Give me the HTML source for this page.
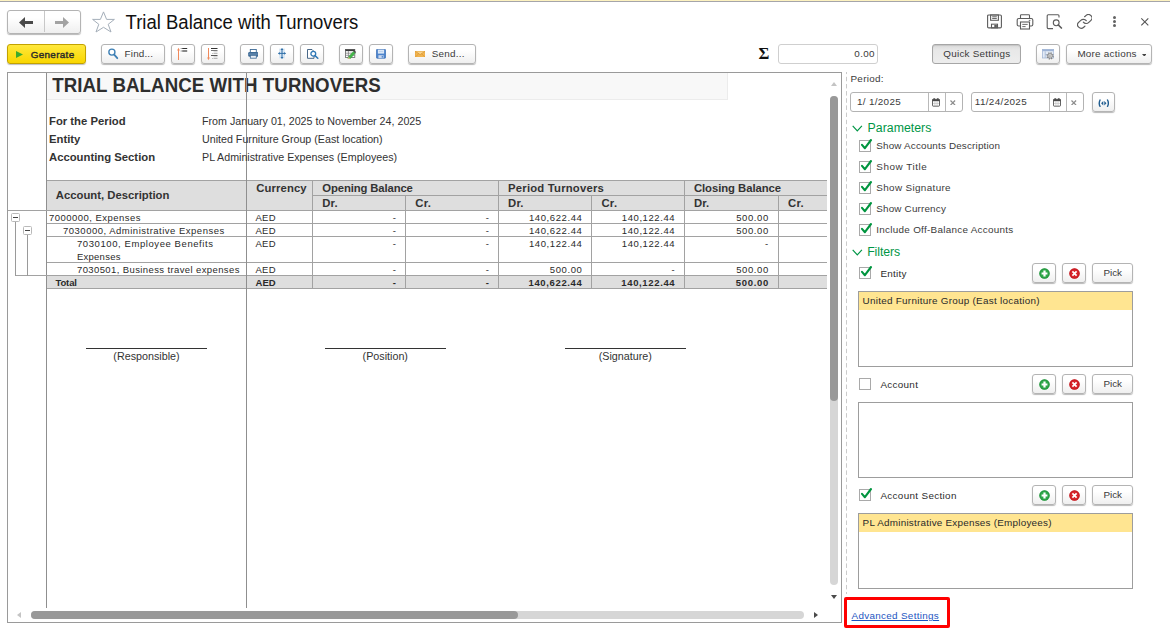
<!DOCTYPE html>
<html><head><meta charset="utf-8"><title>Trial Balance with Turnovers</title>
<style>
*{box-sizing:border-box;margin:0;padding:0}
html,body{width:1170px;height:634px;overflow:hidden;background:#fff}
body{font-family:"Liberation Sans",Arial,sans-serif;font-size:10.4px;color:#333;position:relative}
.a{position:absolute}
.topline{left:0;top:0;width:1170px;height:1px;background:#fdf2c0}
.topline2{left:0;top:1px;width:1170px;height:1px;background:#a5a5aa}
.btn{position:absolute;border:1px solid #b4b4b4;border-radius:3px;background:linear-gradient(#ffffff 30%,#efefef);box-shadow:0 1px 1px rgba(0,0,0,.28);white-space:nowrap}
.btn svg,.inp svg{position:absolute}
.t{position:absolute;white-space:nowrap;line-height:1}
/* report */
.rep{left:7px;top:72px;width:835px;height:551px;border:1px solid #9a9a9a;background:#fff;overflow:hidden}
.ck{position:absolute;width:12px;height:12px;border:1px solid #a9a9a9;background:#fff}
.grp{color:#009646;font-size:12.3px}
.lst{position:absolute;border:1px solid #9d9d9d;background:#fff;left:858px;width:275px;height:76px}
.sel{position:absolute;left:0;top:0;width:273px;height:18px;background:#ffe591}
</style></head><body>
<div class="a topline"></div><div class="a topline2"></div>

<!-- nav -->
<div class="btn" style="left:7px;top:10px;width:74px;height:23.5px">
  <div class="a" style="left:36px;top:0;width:1px;height:21px;background:#c8c8c8"></div>
  <svg style="left:11px;top:6px" width="15" height="11" viewBox="0 0 15 11"><path d="M0 5.5 L6 0 V4 H14 V7 H6 V11 Z" fill="#4a4a4a"/></svg>
  <svg style="left:47px;top:6px" width="15" height="11" viewBox="0 0 15 11"><path d="M14 5.5 L8 0 V4 H0 V7 H8 V11 Z" fill="#a3a3a3"/></svg>
</div>
<svg class="a" style="left:91px;top:10px" width="26" height="24" viewBox="0 0 26 24"><path d="M12.5 1.9 L15.6 9.4 L23.4 9.4 L17.2 14.3 L20 22 L12.5 17.3 L5 22 L7.8 14.3 L1.6 9.4 L9.4 9.4 Z" fill="#fff" stroke="#a4aeb9" stroke-width="1"/></svg>

<!-- header icons -->
<svg class="a" style="left:986px;top:14.4px" width="17" height="14.8" viewBox="0 0 17 16" preserveAspectRatio="none" fill="none" stroke="#5c5c5c" stroke-width="1.1"><path d="M1.6 2.2 Q1.6 1 2.8 1 H14.2 Q15.4 1 15.4 2.2 V13.8 Q15.4 15 14.2 15 H2.8 Q1.6 15 1.6 13.8 Z"/><rect x="4.6" y="1" width="7.8" height="5.8"/><path d="M6.2 3 H10.8 M6.2 4.8 H10.8" stroke-width="1"/><rect x="5.5" y="11" width="6" height="4" /><rect x="8.3" y="11.8" width="2.6" height="3" fill="#5c5c5c" stroke="none"/></svg>
<svg class="a" style="left:1016px;top:14px" width="18" height="16" viewBox="0 0 18 16" fill="none" stroke="#5c5c5c" stroke-width="1.1"><path d="M4.5 4.5 V1.6 Q4.5 0.8 5.3 0.8 H12.7 Q13.5 0.8 13.5 1.6 V4.5"/><path d="M4.5 12 H2.8 Q1.2 12 1.2 10.4 V6.1 Q1.2 4.5 2.8 4.5 H15.2 Q16.8 4.5 16.8 6.1 V10.4 Q16.8 12 15.2 12 H13.5"/><rect x="4.5" y="8" width="9" height="7"/><path d="M6.3 10.4 H11.7 M6.3 12.6 H9.6" stroke-width="0.9"/><path d="M12.8 6.4 H14.4" stroke-width="0.9"/></svg>
<svg class="a" style="left:1046px;top:14px" width="17" height="16" viewBox="0 0 17 16" fill="none" stroke="#5c5c5c" stroke-width="1.1"><path d="M13 3.6 V1.8 Q13 0.8 12 0.8 H2.2 Q1.2 0.8 1.2 1.8 V13.6 Q1.2 14.6 2.2 14.6 H7"/><circle cx="10.2" cy="8.8" r="2.9"/><path d="M12.4 11 L15.4 14" stroke-width="1.7" stroke-linecap="round"/></svg>
<svg class="a" style="left:1076.5px;top:14px" width="15.6" height="14.8" viewBox="1.2 1.2 21.6 21.6" preserveAspectRatio="none" fill="none" stroke="#5c5c5c" stroke-width="1.65" stroke-linecap="round" stroke-linejoin="round"><path d="M10 13a5 5 0 0 0 7.54.54l3-3a5 5 0 0 0-7.07-7.07l-1.72 1.71"/><path d="M14 11a5 5 0 0 0-7.54-.54l-3 3a5 5 0 0 0 7.07 7.07l1.71-1.71"/></svg>
<div class="a" style="left:1113px;top:16px;width:3px;height:3px;border-radius:50%;background:#636363"></div>
<div class="a" style="left:1113px;top:20px;width:3px;height:3px;border-radius:50%;background:#636363"></div>
<div class="a" style="left:1113px;top:24px;width:3px;height:3px;border-radius:50%;background:#636363"></div>
<svg class="a" style="left:1140px;top:17px" width="10" height="10" viewBox="0 0 10 10"><path d="M1.3 1.3 L8.3 8.3 M8.3 1.3 L1.3 8.3" stroke="#555" stroke-width="1.1"/></svg>
<!-- toolbar -->
<div class="btn" style="left:7px;top:44px;width:79px;height:20px;border-color:#c2a200;background:linear-gradient(#ffe83c,#f9d600);box-shadow:0 1px 1px rgba(0,0,0,.25)">
  <svg style="left:8px;top:6px" width="7" height="7" viewBox="0 0 7 7"><path d="M0 0 L7 3.5 L0 7 Z" fill="#3cab2d"/></svg>
</div>
<div class="btn" style="left:101px;top:44px;width:64px;height:20px">
  <svg style="left:5px;top:3px" width="12" height="12" viewBox="0 0 12 12"><circle cx="4.9" cy="4.1" r="3.05" fill="#fff" stroke="#3f80b5" stroke-width="1.35"/><path d="M7.2 6.7 L10.3 10.2" stroke="#3f80b5" stroke-width="1.8" stroke-linecap="round"/></svg>
</div>
<div class="btn" style="left:171px;top:44px;width:24px;height:20px">
  <svg style="left:3.1px;top:2.2px" width="14" height="14" viewBox="0 0 14 14"><path d="M3.5 13 V2" stroke="#f0895a" stroke-width="1"/><path d="M2.1 3.6 L3.5 0.8 L4.9 3.6 Z" fill="#f0895a"/><rect x="7.2" y="1" width="5" height="1" fill="#333"/><rect x="7.2" y="3" width="5" height="2" fill="#888"/><rect x="5.8" y="1" width="0.7" height="1" fill="#555"/><rect x="5.8" y="3" width="0.7" height="2" fill="#999"/></svg>
</div>
<div class="btn" style="left:201px;top:44px;width:24px;height:20px">
  <svg style="left:2.9px;top:2.2px" width="16" height="14" viewBox="0 0 16 14"><path d="M3.5 1 V12" stroke="#f0895a" stroke-width="1"/><path d="M2.1 10.4 L3.5 13.2 L4.9 10.4 Z" fill="#f0895a"/><rect x="6" y="1" width="6.5" height="1" fill="#333"/><rect x="6" y="3" width="6.5" height="1" fill="#777"/><rect x="8.5" y="4.5" width="4" height="0.8" fill="#bbb"/><rect x="8.5" y="6" width="4" height="0.8" fill="#aaa"/><rect x="6" y="8" width="6.5" height="1" fill="#555"/><rect x="8.5" y="9.5" width="4" height="0.8" fill="#bbb"/><rect x="8.5" y="11" width="4" height="0.8" fill="#aaa"/><rect x="7.4" y="6" width="0.6" height="0.8" fill="#888"/><rect x="7.4" y="11" width="0.6" height="0.8" fill="#888"/></svg>
</div>
<div class="btn" style="left:240px;top:44px;width:24px;height:20px">
  <svg style="left:6.6px;top:4px" width="10.6" height="9.6" viewBox="0 0 10.6 9.6"><rect x="2.3" y="0.45" width="6" height="3" fill="#fff" stroke="#3d6a96" stroke-width="0.9"/><rect x="0.2" y="2.9" width="10.2" height="4.9" rx="1.4" fill="#3d6a96"/><rect x="0.9" y="4.6" width="8.8" height="0.9" fill="#7d9fc0"/><rect x="2.3" y="6.3" width="6" height="2.9" fill="#e9eff6" stroke="#3d6a96" stroke-width="0.8"/></svg>
</div>
<div class="btn" style="left:270px;top:44px;width:24px;height:20px">
  <svg style="left:6.6px;top:3px" width="8" height="11" viewBox="0 0 8 11"><rect x="1" y="0.6" width="6" height="9.8" fill="#dbe8f4"/><path d="M4 0.8 V10.2 M0.6 5.4 H7.4" stroke="#2f6fa8" stroke-width="1"/><path d="M4 0 L5.5 2 H2.5 Z M4 11 L5.5 9 H2.5 Z M0 5.4 L1.8 4.1 V6.7 Z M8 5.4 L6.2 4.1 V6.7 Z" fill="#2f6fa8"/></svg>
</div>
<div class="btn" style="left:300px;top:44px;width:24px;height:20px">
  <svg style="left:6px;top:4px" width="12" height="10" viewBox="0 0 12 10"><path d="M0.5 0.5 H5 L7 2.5 V9.3 H0.5 Z" fill="#fff" stroke="#34577a" stroke-width="0.9"/><circle cx="6.3" cy="4.7" r="2.4" fill="#fff" stroke="#2f78b6" stroke-width="1.3"/><path d="M8 6.6 L10.8 9.3" stroke="#2f78b6" stroke-width="1.5" stroke-linecap="round"/></svg>
</div>
<div class="btn" style="left:339px;top:44px;width:24px;height:20px">
  <svg style="left:5.2px;top:4.4px" width="11.5" height="10" viewBox="0 0 11.5 10"><rect x="0.4" y="0.4" width="9.4" height="8" fill="#fff" stroke="#666" stroke-width="0.8"/><rect x="0.4" y="0.4" width="9.4" height="1.7" fill="#3c3c3c"/><path d="M0.4 4.2 H9.8 M0.4 6.3 H9.8 M3.4 2 V8.4" stroke="#777" stroke-width="0.7"/><path d="M3.4 7.9 L8.3 2.4 L10.3 4.1 L5.5 9.5 L2.9 9.9 Z" fill="#43b649" stroke="#2d9338" stroke-width="0.4"/><path d="M2.9 9.9 L3.4 7.9 L5.5 9.5 Z" fill="#e3bd86"/><path d="M8.3 2.4 L9.2 1.4 L11.2 3.1 L10.3 4.1 Z" fill="#4a4a4a"/></svg>
</div>
<div class="btn" style="left:369px;top:44px;width:24px;height:20px">
  <svg style="left:6px;top:4px" width="10" height="9.6" viewBox="0 0 10 9.6"><rect x="0.4" y="0.4" width="9.2" height="8.8" rx="0.7" fill="#4d84cc" stroke="#3f72b8" stroke-width="0.8"/><rect x="1.9" y="0.7" width="6.2" height="3.9" fill="#dbe8f7"/><rect x="2.8" y="2" width="4.4" height="0.6" fill="#a9c2e4"/><rect x="2.4" y="6.2" width="5.2" height="2.9" fill="#c9d8ee"/><rect x="5.7" y="6.8" width="1.2" height="1.9" fill="#4d84cc"/></svg>
</div>
<div class="btn" style="left:408px;top:44px;width:68px;height:20px">
  <svg style="left:5.8px;top:5.6px" width="10.3" height="6.4" viewBox="0 0 11 7" preserveAspectRatio="none"><rect x="0" y="0" width="11" height="7" fill="#f2b552"/><path d="M0 0 L5.5 4 L11 0" fill="#f9d48c" stroke="#d8932b" stroke-width="0.8"/><path d="M0 7 L4 3 M11 7 L7 3" stroke="#d8932b" stroke-width="0.7"/><rect x="0.25" y="0.25" width="10.5" height="6.5" fill="none" stroke="#e0a03a" stroke-width="0.5"/></svg>
</div>
<!-- sum -->
<div class="a" style="left:778px;top:44px;width:100px;height:20px;border:1px solid #cfcfcf;border-radius:3px;background:#fff"></div>
<div class="btn" style="left:932px;top:44px;width:89px;height:20px;background:linear-gradient(#dadada 0,#e8e8e8 30%,#ededed 100%);border-color:#a6a6a6;box-shadow:inset 0 1px 1px rgba(0,0,0,.10)"></div>
<div class="btn" style="left:1036px;top:44px;width:24px;height:20px">
  <svg style="left:4.8px;top:4px" width="12.4" height="10.6" viewBox="0 0 12.4 10.6"><rect x="0.4" y="0.4" width="11.4" height="8.6" fill="#e4ebf6" stroke="#a3b7d6" stroke-width="0.8"/><rect x="0.4" y="0.4" width="11.4" height="1.8" fill="#9db3d6"/><path d="M3.2 2.4 V9 M3.2 5.6 H6" stroke="#a3b7d6" stroke-width="0.8"/><circle cx="8.1" cy="6.9" r="3" fill="none" stroke="#858585" stroke-width="1.3" stroke-dasharray="1.3 1.06"/><circle cx="8.1" cy="6.9" r="2.2" fill="#fbfbfb" stroke="#7d7d7d" stroke-width="0.9"/><circle cx="8.1" cy="6.9" r="0.9" fill="#fff" stroke="#8a8a8a" stroke-width="0.7"/></svg>
</div>
<div class="btn" style="left:1066px;top:44px;width:86px;height:20px">
  <svg style="left:74.6px;top:8.8px" width="4.6" height="2.6" viewBox="0 0 5 3" preserveAspectRatio="none"><path d="M0 0 H5 L2.5 3 Z" fill="#444"/></svg>
</div>
<div class="t" style="top:12px;font-size:18.5px;line-height:21px;left:125.60px;transform:scaleY(1.075);transform-origin:0 17px;color:#111;">Trial Balance with Turnovers</div>
<div class="t" style="top:49px;font-size:9.9px;line-height:11px;left:30.70px;letter-spacing:0.332px;color:#2a2a2a;-webkit-text-stroke:0.4px #2a2a2a;">Generate</div>
<div class="t" style="top:48px;font-size:9.9px;line-height:11px;left:124.60px;letter-spacing:0.165px;color:#3a3a3a;">Find...</div>
<div class="t" style="top:48px;font-size:9.9px;line-height:11px;left:431.80px;letter-spacing:0.221px;color:#3a3a3a;">Send...</div>
<div class="t" style="top:44px;font-size:16.6px;line-height:19px;left:758.60px;font-family:'Liberation Serif','DejaVu Serif',serif;font-weight:bold;color:#111;">Σ</div>
<div class="t" style="top:48px;font-size:9.9px;line-height:11px;right:295.19px;letter-spacing:0.31px;color:#3a3a3a;">0.00</div>
<div class="t" style="top:48px;font-size:9.9px;line-height:11px;left:943.30px;letter-spacing:0.244px;color:#3a3a3a;">Quick Settings</div>
<div class="t" style="top:48px;font-size:9.9px;line-height:11px;left:1077.40px;letter-spacing:0.239px;color:#3a3a3a;">More actions</div>
<div class="a rep"></div>
<div class="a" style="left:47px;top:73px;width:681px;height:27px;background:#f8f8f8;border-right:1px solid #ececec;border-bottom:1px solid #ececec;"></div>
<div class="t" style="top:75px;font-size:18.7px;line-height:21px;left:52.20px;letter-spacing:0.07px;transform:scaleY(1.05);transform-origin:0 17px;font-weight:bold;color:#2e2e2e;">TRIAL BALANCE WITH TURNOVERS</div>
<div class="a" style="left:46px;top:73px;width:1px;height:535px;background:#8f8f8f;"></div>
<div class="a" style="left:246px;top:73px;width:1px;height:535px;background:#8f8f8f;"></div>
<div class="t" style="top:115px;font-size:11.3px;line-height:12px;left:49.00px;font-weight:bold;color:#333;">For the Period</div>
<div class="t" style="top:115px;font-size:10.7px;line-height:12px;left:202.00px;color:#333;">From January 01, 2025 to November 24, 2025</div>
<div class="t" style="top:133px;font-size:11.3px;line-height:12px;left:49.00px;font-weight:bold;color:#333;">Entity</div>
<div class="t" style="top:133px;font-size:10.7px;line-height:12px;left:202.00px;color:#333;">United Furniture Group (East location)</div>
<div class="t" style="top:151px;font-size:11.3px;line-height:12px;left:49.00px;font-weight:bold;color:#333;">Accounting Section</div>
<div class="t" style="top:151px;font-size:10.7px;line-height:12px;left:202.00px;color:#333;">PL Administrative Expenses (Employees)</div>
<div class="a" style="left:47px;top:180px;width:780px;height:31px;background:#dedede;"></div>
<div class="a" style="left:47px;top:276px;width:780px;height:13px;background:#dedede;"></div>
<div class="a" style="left:47px;top:180px;width:780px;height:1px;background:#a2a2a2;"></div>
<div class="a" style="left:312px;top:195px;width:515px;height:1px;background:#a2a2a2;"></div>
<div class="a" style="left:8px;top:210px;width:819px;height:1px;background:#a2a2a2;"></div>
<div class="a" style="left:47px;top:223px;width:780px;height:1px;background:#a2a2a2;"></div>
<div class="a" style="left:47px;top:236px;width:780px;height:1px;background:#a2a2a2;"></div>
<div class="a" style="left:47px;top:262px;width:780px;height:1px;background:#a2a2a2;"></div>
<div class="a" style="left:15px;top:275px;width:812px;height:1px;background:#a2a2a2;"></div>
<div class="a" style="left:47px;top:288px;width:780px;height:1px;background:#a2a2a2;"></div>
<div class="a" style="left:312px;top:180px;width:1px;height:109px;background:#a2a2a2;"></div>
<div class="a" style="left:405px;top:195px;width:1px;height:94px;background:#a2a2a2;"></div>
<div class="a" style="left:498px;top:180px;width:1px;height:109px;background:#a2a2a2;"></div>
<div class="a" style="left:591px;top:195px;width:1px;height:94px;background:#a2a2a2;"></div>
<div class="a" style="left:684px;top:180px;width:1px;height:109px;background:#a2a2a2;"></div>
<div class="a" style="left:778px;top:195px;width:1px;height:94px;background:#a2a2a2;"></div>
<div class="a" style="left:246px;top:180px;width:1px;height:109px;background:#8f8f8f;"></div>
<div class="t" style="top:189px;font-size:11.3px;line-height:12px;left:55.80px;font-weight:bold;color:#333;">Account, Description</div>
<div class="t" style="top:182px;font-size:11.3px;line-height:12px;left:256.20px;letter-spacing:0.12px;font-weight:bold;color:#333;">Currency</div>
<div class="t" style="top:182px;font-size:11.3px;line-height:12px;left:322.30px;letter-spacing:-0.12px;font-weight:bold;color:#333;">Opening Balance</div>
<div class="t" style="top:197px;font-size:11.3px;line-height:12px;left:322.30px;letter-spacing:0.15px;font-weight:bold;color:#333;">Dr.</div>
<div class="t" style="top:182px;font-size:11.3px;line-height:12px;left:508.10px;letter-spacing:0.2px;font-weight:bold;color:#333;">Period Turnovers</div>
<div class="t" style="top:197px;font-size:11.3px;line-height:12px;left:508.10px;letter-spacing:0.15px;font-weight:bold;color:#333;">Dr.</div>
<div class="t" style="top:182px;font-size:11.3px;line-height:12px;left:693.90px;letter-spacing:-0.05px;font-weight:bold;color:#333;">Closing Balance</div>
<div class="t" style="top:197px;font-size:11.3px;line-height:12px;left:693.90px;letter-spacing:0.15px;font-weight:bold;color:#333;">Dr.</div>
<div class="t" style="top:197px;font-size:11.3px;line-height:12px;left:415.30px;letter-spacing:0.3px;font-weight:bold;color:#333;">Cr.</div>
<div class="t" style="top:197px;font-size:11.3px;line-height:12px;left:601.40px;letter-spacing:0.3px;font-weight:bold;color:#333;">Cr.</div>
<div class="t" style="top:197px;font-size:11.3px;line-height:12px;left:788.00px;letter-spacing:0.3px;font-weight:bold;color:#333;">Cr.</div>
<div class="t" style="top:212px;font-size:9.5px;line-height:11px;left:49.00px;letter-spacing:0.463px;color:#2a2a2a;">7000000, Expenses</div>
<div class="t" style="top:212px;font-size:9.5px;line-height:11px;left:255.60px;letter-spacing:0.183px;color:#2a2a2a;">AED</div>
<div class="t" style="top:212px;font-size:9.5px;line-height:11px;right:774.00px;color:#2a2a2a;">-</div>
<div class="t" style="top:212px;font-size:9.5px;line-height:11px;right:681.00px;color:#2a2a2a;">-</div>
<div class="t" style="top:212px;font-size:9.5px;line-height:11px;right:587.62px;letter-spacing:0.584px;color:#2a2a2a;">140,622.44</div>
<div class="t" style="top:212px;font-size:9.5px;line-height:11px;right:494.82px;letter-spacing:0.584px;color:#2a2a2a;">140,122.44</div>
<div class="t" style="top:212px;font-size:9.5px;line-height:11px;right:401.21px;letter-spacing:0.589px;color:#2a2a2a;">500.00</div>
<div class="t" style="top:225px;font-size:9.5px;line-height:11px;left:63.00px;letter-spacing:0.498px;color:#2a2a2a;">7030000, Administrative Expenses</div>
<div class="t" style="top:225px;font-size:9.5px;line-height:11px;left:255.60px;letter-spacing:0.183px;color:#2a2a2a;">AED</div>
<div class="t" style="top:225px;font-size:9.5px;line-height:11px;right:774.00px;color:#2a2a2a;">-</div>
<div class="t" style="top:225px;font-size:9.5px;line-height:11px;right:681.00px;color:#2a2a2a;">-</div>
<div class="t" style="top:225px;font-size:9.5px;line-height:11px;right:587.62px;letter-spacing:0.584px;color:#2a2a2a;">140,622.44</div>
<div class="t" style="top:225px;font-size:9.5px;line-height:11px;right:494.82px;letter-spacing:0.584px;color:#2a2a2a;">140,122.44</div>
<div class="t" style="top:225px;font-size:9.5px;line-height:11px;right:401.21px;letter-spacing:0.589px;color:#2a2a2a;">500.00</div>
<div class="t" style="top:238px;font-size:9.5px;line-height:11px;left:77.00px;letter-spacing:0.581px;color:#2a2a2a;">7030100, Employee Benefits</div>
<div class="t" style="top:238px;font-size:9.5px;line-height:11px;left:255.60px;letter-spacing:0.183px;color:#2a2a2a;">AED</div>
<div class="t" style="top:238px;font-size:9.5px;line-height:11px;right:774.00px;color:#2a2a2a;">-</div>
<div class="t" style="top:238px;font-size:9.5px;line-height:11px;right:681.00px;color:#2a2a2a;">-</div>
<div class="t" style="top:238px;font-size:9.5px;line-height:11px;right:587.62px;letter-spacing:0.584px;color:#2a2a2a;">140,122.44</div>
<div class="t" style="top:238px;font-size:9.5px;line-height:11px;right:494.82px;letter-spacing:0.584px;color:#2a2a2a;">140,122.44</div>
<div class="t" style="top:238px;font-size:9.5px;line-height:11px;right:401.80px;color:#2a2a2a;">-</div>
<div class="t" style="top:264px;font-size:9.5px;line-height:11px;left:77.00px;letter-spacing:0.388px;color:#2a2a2a;">7030501, Business travel expenses</div>
<div class="t" style="top:264px;font-size:9.5px;line-height:11px;left:255.60px;letter-spacing:0.183px;color:#2a2a2a;">AED</div>
<div class="t" style="top:264px;font-size:9.5px;line-height:11px;right:774.00px;color:#2a2a2a;">-</div>
<div class="t" style="top:264px;font-size:9.5px;line-height:11px;right:681.00px;color:#2a2a2a;">-</div>
<div class="t" style="top:264px;font-size:9.5px;line-height:11px;right:587.61px;letter-spacing:0.589px;color:#2a2a2a;">500.00</div>
<div class="t" style="top:264px;font-size:9.5px;line-height:11px;right:495.40px;color:#2a2a2a;">-</div>
<div class="t" style="top:264px;font-size:9.5px;line-height:11px;right:401.21px;letter-spacing:0.589px;color:#2a2a2a;">500.00</div>
<div class="t" style="top:251px;font-size:9.5px;line-height:11px;left:77.00px;letter-spacing:0.24px;color:#2a2a2a;">Expenses</div>
<div class="t" style="top:277px;font-size:9.5px;line-height:11px;left:55.40px;letter-spacing:-0.1px;font-weight:bold;color:#2a2a2a;">Total</div>
<div class="t" style="top:277px;font-size:9.5px;line-height:11px;left:255.60px;font-weight:bold;color:#2a2a2a;">AED</div>
<div class="t" style="top:277px;font-size:9.5px;line-height:11px;right:774.00px;font-weight:bold;color:#2a2a2a;">-</div>
<div class="t" style="top:277px;font-size:9.5px;line-height:11px;right:681.00px;font-weight:bold;color:#2a2a2a;">-</div>
<div class="t" style="top:277px;font-size:9.5px;line-height:11px;right:587.56px;letter-spacing:0.639px;font-weight:bold;color:#2a2a2a;">140,622.44</div>
<div class="t" style="top:277px;font-size:9.5px;line-height:11px;right:494.76px;letter-spacing:0.639px;font-weight:bold;color:#2a2a2a;">140,122.44</div>
<div class="t" style="top:277px;font-size:9.5px;line-height:11px;right:401.13px;letter-spacing:0.669px;font-weight:bold;color:#2a2a2a;">500.00</div>
<div class="a" style="left:15px;top:222px;width:1px;height:54px;background:#9a9a9a;"></div>
<div class="a" style="left:27px;top:235px;width:1px;height:41px;background:#9a9a9a;"></div>
<div class="a" style="left:11px;top:213px;width:9px;height:9px;border:1px solid #b9b9b9;background:#fff;border-radius:1.5px"><div class="a" style="left:1px;top:3px;width:5px;height:1px;background:#444"></div></div>
<div class="a" style="left:23px;top:226px;width:9px;height:9px;border:1px solid #b9b9b9;background:#fff;border-radius:1.5px"><div class="a" style="left:1px;top:3px;width:5px;height:1px;background:#444"></div></div>
<div class="a" style="left:86px;top:348px;width:121px;height:1px;background:#333;"></div>
<div class="t" style="top:350px;font-size:10.75px;line-height:12px;left:-3.50px;width:300px;text-align:center;color:#333;">(Responsible)</div>
<div class="a" style="left:324.5px;top:348px;width:121.5px;height:1px;background:#333;"></div>
<div class="t" style="top:350px;font-size:10.75px;line-height:12px;left:235.25px;width:300px;text-align:center;color:#333;">(Position)</div>
<div class="a" style="left:565px;top:348px;width:120.5px;height:1px;background:#333;"></div>
<div class="t" style="top:350px;font-size:10.75px;line-height:12px;left:475.25px;width:300px;text-align:center;color:#333;">(Signature)</div>
<div class="a" style="left:830px;top:96px;width:8px;height:489px;background:#d6d6d6;border-radius:4px;"></div>
<div class="a" style="left:830px;top:96px;width:8px;height:305px;background:#999;border-radius:4px;"></div>
<svg class="a" style="left:831px;top:82.2px" width="6" height="4" viewBox="0 0 6 4"><path d="M0 4 L3 0 L6 4 Z" fill="#c4c4c4"/></svg>
<svg class="a" style="left:831px;top:595px" width="6" height="4" viewBox="0 0 6 4"><path d="M0 0 L3 4 L6 0 Z" fill="#4a4a4a"/></svg>
<div class="a" style="left:31px;top:611px;width:773px;height:8px;background:#d6d6d6;border-radius:4px;"></div>
<div class="a" style="left:31px;top:611px;width:487px;height:8px;background:#999;border-radius:4px;"></div>
<svg class="a" style="left:17px;top:612px" width="4" height="6" viewBox="0 0 4 6"><path d="M4 0 L0 3 L4 6 Z" fill="#c4c4c4"/></svg>
<svg class="a" style="left:814px;top:612px" width="4" height="6" viewBox="0 0 4 6"><path d="M0 0 L4 3 L0 6 Z" fill="#4a4a4a"/></svg>
<div class="a" style="left:846px;top:72px;width:1px;height:522px;background-image:linear-gradient(to bottom,#cbcbcb 0,#cbcbcb 65.5%,transparent 65.5%,transparent 100%);background-size:1px 7.17px;background-position:0 -2.37px;background-repeat:repeat-y"></div>
<div class="t" style="top:73px;font-size:9.9px;line-height:11px;left:850.50px;letter-spacing:0.288px;color:#3a3a3a;">Period:</div>
<div class="a inp" style="left:850px;top:92px;width:113px;height:20px;border:1px solid #b3b3b3;border-radius:3px;background:#fff"><div class="a" style="left:77px;top:0;width:1px;height:18px;background:#b9b9b9"></div><div class="a" style="left:94px;top:0;width:1px;height:18px;background:#b9b9b9"></div><svg style="left:81.2px;top:5px" width="8" height="8.6" viewBox="0 0 8 8.6"><rect x="0.45" y="1.3" width="7.1" height="6.85" rx="0.7" fill="#fff" stroke="#4a4a4a" stroke-width="0.9"/><rect x="0.45" y="1.3" width="7.1" height="1.9" fill="#4a4a4a"/><rect x="1.6" y="0" width="1.1" height="2" fill="#4a4a4a"/><rect x="5.3" y="0" width="1.1" height="2" fill="#4a4a4a"/><path d="M1 5.4 H7 M2.9 3.4 V7.8 M5.1 3.4 V7.8" stroke="#b5b5b5" stroke-width="0.6"/></svg><svg style="left:99.3px;top:6.6px" width="5.6" height="5.6" viewBox="0 0 5.6 5.6"><path d="M0.5 0.5 L5.1 5.1 M5.1 0.5 L0.5 5.1" stroke="#8c8c8c" stroke-width="1.25"/></svg></div>
<div class="a inp" style="left:971px;top:92px;width:113px;height:20px;border:1px solid #b3b3b3;border-radius:3px;background:#fff"><div class="a" style="left:77px;top:0;width:1px;height:18px;background:#b9b9b9"></div><div class="a" style="left:94px;top:0;width:1px;height:18px;background:#b9b9b9"></div><svg style="left:81.2px;top:5px" width="8" height="8.6" viewBox="0 0 8 8.6"><rect x="0.45" y="1.3" width="7.1" height="6.85" rx="0.7" fill="#fff" stroke="#4a4a4a" stroke-width="0.9"/><rect x="0.45" y="1.3" width="7.1" height="1.9" fill="#4a4a4a"/><rect x="1.6" y="0" width="1.1" height="2" fill="#4a4a4a"/><rect x="5.3" y="0" width="1.1" height="2" fill="#4a4a4a"/><path d="M1 5.4 H7 M2.9 3.4 V7.8 M5.1 3.4 V7.8" stroke="#b5b5b5" stroke-width="0.6"/></svg><svg style="left:99.3px;top:6.6px" width="5.6" height="5.6" viewBox="0 0 5.6 5.6"><path d="M0.5 0.5 L5.1 5.1 M5.1 0.5 L0.5 5.1" stroke="#8c8c8c" stroke-width="1.25"/></svg></div>
<div class="t" style="top:96px;font-size:9.9px;line-height:11px;left:857.00px;letter-spacing:0.314px;color:#3a3a3a;">1/ 1/2025</div>
<div class="t" style="top:96px;font-size:9.9px;line-height:11px;left:974.80px;letter-spacing:0.354px;color:#3a3a3a;">11/24/2025</div>
<div class="btn" style="left:1092px;top:92px;width:23px;height:20px;"><svg style="left:4.8px;top:6px" width="11.6" height="8.4" viewBox="0 0 11.6 8.4"><path d="M2.3 0.5 Q0.1 4.2 2.3 7.9 M9.3 0.5 Q11.5 4.2 9.3 7.9" fill="none" stroke="#1f5c8f" stroke-width="1.4"/><path d="M5.3 2 V6.4 L3.1 4.2 Z M6.3 2 V6.4 L8.5 4.2 Z" fill="#1f5c8f"/></svg></div>
<svg class="a" style="left:852px;top:125px" width="11" height="7" viewBox="0 0 11 7"><path d="M0.7 0.8 L5.3 5.8 L9.9 0.8" fill="none" stroke="#009646" stroke-width="1.2"/></svg>
<div class="t grp" style="top:121px;font-size:12.3px;line-height:14px;left:867.60px;letter-spacing:0.025px;">Parameters</div>
<div class="ck" style="left:859px;top:140px"></div>
<svg class="a" style="left:860px;top:137px" width="14" height="14" viewBox="0 0 14 14"><path d="M2 7.9 L4.9 11.2 L11 3" fill="none" stroke="#00953f" stroke-width="2.1" stroke-linecap="round" stroke-linejoin="round"/></svg>
<div class="t" style="top:140px;font-size:9.9px;line-height:11px;left:876.30px;letter-spacing:0.168px;color:#3a3a3a;">Show Accounts Description</div>
<div class="ck" style="left:859px;top:161px"></div>
<svg class="a" style="left:860px;top:158px" width="14" height="14" viewBox="0 0 14 14"><path d="M2 7.9 L4.9 11.2 L11 3" fill="none" stroke="#00953f" stroke-width="2.1" stroke-linecap="round" stroke-linejoin="round"/></svg>
<div class="t" style="top:161px;font-size:9.9px;line-height:11px;left:876.30px;letter-spacing:0.547px;color:#3a3a3a;">Show Title</div>
<div class="ck" style="left:859px;top:182px"></div>
<svg class="a" style="left:860px;top:179px" width="14" height="14" viewBox="0 0 14 14"><path d="M2 7.9 L4.9 11.2 L11 3" fill="none" stroke="#00953f" stroke-width="2.1" stroke-linecap="round" stroke-linejoin="round"/></svg>
<div class="t" style="top:182px;font-size:9.9px;line-height:11px;left:876.30px;letter-spacing:0.354px;color:#3a3a3a;">Show Signature</div>
<div class="ck" style="left:859px;top:203px"></div>
<svg class="a" style="left:860px;top:200px" width="14" height="14" viewBox="0 0 14 14"><path d="M2 7.9 L4.9 11.2 L11 3" fill="none" stroke="#00953f" stroke-width="2.1" stroke-linecap="round" stroke-linejoin="round"/></svg>
<div class="t" style="top:203px;font-size:9.9px;line-height:11px;left:876.30px;letter-spacing:0.168px;color:#3a3a3a;">Show Currency</div>
<div class="ck" style="left:859px;top:224px"></div>
<svg class="a" style="left:860px;top:221px" width="14" height="14" viewBox="0 0 14 14"><path d="M2 7.9 L4.9 11.2 L11 3" fill="none" stroke="#00953f" stroke-width="2.1" stroke-linecap="round" stroke-linejoin="round"/></svg>
<div class="t" style="top:224px;font-size:9.9px;line-height:11px;left:876.30px;letter-spacing:0.282px;color:#3a3a3a;">Include Off-Balance Accounts</div>
<svg class="a" style="left:852px;top:249px" width="11" height="7" viewBox="0 0 11 7"><path d="M0.7 0.8 L5.3 5.8 L9.9 0.8" fill="none" stroke="#009646" stroke-width="1.2"/></svg>
<div class="t grp" style="top:245px;font-size:12.3px;line-height:14px;left:867.20px;letter-spacing:-0.081px;">Filters</div>
<div class="ck" style="left:859px;top:267px"></div>
<svg class="a" style="left:860px;top:264px" width="14" height="14" viewBox="0 0 14 14"><path d="M2 7.9 L4.9 11.2 L11 3" fill="none" stroke="#00953f" stroke-width="2.1" stroke-linecap="round" stroke-linejoin="round"/></svg>
<div class="t" style="top:268px;font-size:9.9px;line-height:11px;left:880.40px;letter-spacing:0.268px;color:#2b2b2b;">Entity</div>
<div class="btn" style="left:1032px;top:263px;width:24px;height:20px;"><svg style="left:5.7px;top:3.7px" width="11" height="11" viewBox="0 0 11 11"><circle cx="5.5" cy="5.5" r="5.2" fill="#2fa84a"/><circle cx="5.5" cy="5.5" r="4.7" fill="none" stroke="#1f8a38" stroke-width="0.6"/><path d="M5.5 2.6 V8.4 M2.6 5.5 H8.4" stroke="#fff" stroke-width="2.2"/></svg></div>
<div class="btn" style="left:1062px;top:263px;width:24px;height:20px;"><svg style="left:5.7px;top:3.7px" width="11" height="11" viewBox="0 0 11 11"><circle cx="5.5" cy="5.5" r="5.2" fill="#d8232a"/><circle cx="5.5" cy="5.5" r="4.7" fill="none" stroke="#b5161c" stroke-width="0.6"/><path d="M3.4 3.4 L7.6 7.6 M7.6 3.4 L3.4 7.6" stroke="#fff" stroke-width="1.7"/></svg></div>
<div class="btn" style="left:1092px;top:263px;width:41px;height:20px;"></div>
<div class="t" style="top:267px;font-size:9.9px;line-height:11px;left:1103.40px;letter-spacing:-0.001px;color:#3a3a3a;">Pick</div>
<div class="lst" style="top:291px"><div class="sel"></div></div>
<div class="t" style="top:295px;font-size:9.9px;line-height:11px;left:862.60px;letter-spacing:0.271px;color:#2a2a2a;">United Furniture Group (East location)</div>
<div class="ck" style="left:859px;top:378px"></div>
<div class="t" style="top:379px;font-size:9.9px;line-height:11px;left:880.40px;letter-spacing:0.305px;color:#2b2b2b;">Account</div>
<div class="btn" style="left:1032px;top:374px;width:24px;height:20px;"><svg style="left:5.7px;top:3.7px" width="11" height="11" viewBox="0 0 11 11"><circle cx="5.5" cy="5.5" r="5.2" fill="#2fa84a"/><circle cx="5.5" cy="5.5" r="4.7" fill="none" stroke="#1f8a38" stroke-width="0.6"/><path d="M5.5 2.6 V8.4 M2.6 5.5 H8.4" stroke="#fff" stroke-width="2.2"/></svg></div>
<div class="btn" style="left:1062px;top:374px;width:24px;height:20px;"><svg style="left:5.7px;top:3.7px" width="11" height="11" viewBox="0 0 11 11"><circle cx="5.5" cy="5.5" r="5.2" fill="#d8232a"/><circle cx="5.5" cy="5.5" r="4.7" fill="none" stroke="#b5161c" stroke-width="0.6"/><path d="M3.4 3.4 L7.6 7.6 M7.6 3.4 L3.4 7.6" stroke="#fff" stroke-width="1.7"/></svg></div>
<div class="btn" style="left:1092px;top:374px;width:41px;height:20px;"></div>
<div class="t" style="top:378px;font-size:9.9px;line-height:11px;left:1103.40px;letter-spacing:-0.001px;color:#3a3a3a;">Pick</div>
<div class="lst" style="top:402px"></div>
<div class="ck" style="left:859px;top:489px"></div>
<svg class="a" style="left:860px;top:486px" width="14" height="14" viewBox="0 0 14 14"><path d="M2 7.9 L4.9 11.2 L11 3" fill="none" stroke="#00953f" stroke-width="2.1" stroke-linecap="round" stroke-linejoin="round"/></svg>
<div class="t" style="top:490px;font-size:9.9px;line-height:11px;left:880.40px;letter-spacing:0.333px;color:#2b2b2b;">Account Section</div>
<div class="btn" style="left:1032px;top:485px;width:24px;height:20px;"><svg style="left:5.7px;top:3.7px" width="11" height="11" viewBox="0 0 11 11"><circle cx="5.5" cy="5.5" r="5.2" fill="#2fa84a"/><circle cx="5.5" cy="5.5" r="4.7" fill="none" stroke="#1f8a38" stroke-width="0.6"/><path d="M5.5 2.6 V8.4 M2.6 5.5 H8.4" stroke="#fff" stroke-width="2.2"/></svg></div>
<div class="btn" style="left:1062px;top:485px;width:24px;height:20px;"><svg style="left:5.7px;top:3.7px" width="11" height="11" viewBox="0 0 11 11"><circle cx="5.5" cy="5.5" r="5.2" fill="#d8232a"/><circle cx="5.5" cy="5.5" r="4.7" fill="none" stroke="#b5161c" stroke-width="0.6"/><path d="M3.4 3.4 L7.6 7.6 M7.6 3.4 L3.4 7.6" stroke="#fff" stroke-width="1.7"/></svg></div>
<div class="btn" style="left:1092px;top:485px;width:41px;height:20px;"></div>
<div class="t" style="top:489px;font-size:9.9px;line-height:11px;left:1103.40px;letter-spacing:-0.001px;color:#3a3a3a;">Pick</div>
<div class="lst" style="top:513px"><div class="sel"></div></div>
<div class="t" style="top:517px;font-size:9.9px;line-height:11px;left:862.60px;letter-spacing:0.236px;color:#2a2a2a;">PL Administrative Expenses (Employees)</div>
<div class="a" style="left:844px;top:597px;width:106px;height:31px;border:3px solid #ff0000;border-radius:2px"></div>
<div class="t" style="top:610px;font-size:9.9px;line-height:11px;left:851.50px;letter-spacing:0.309px;color:#1c55c2;text-decoration:underline;text-underline-offset:1px;">Advanced Settings</div>
</body></html>
